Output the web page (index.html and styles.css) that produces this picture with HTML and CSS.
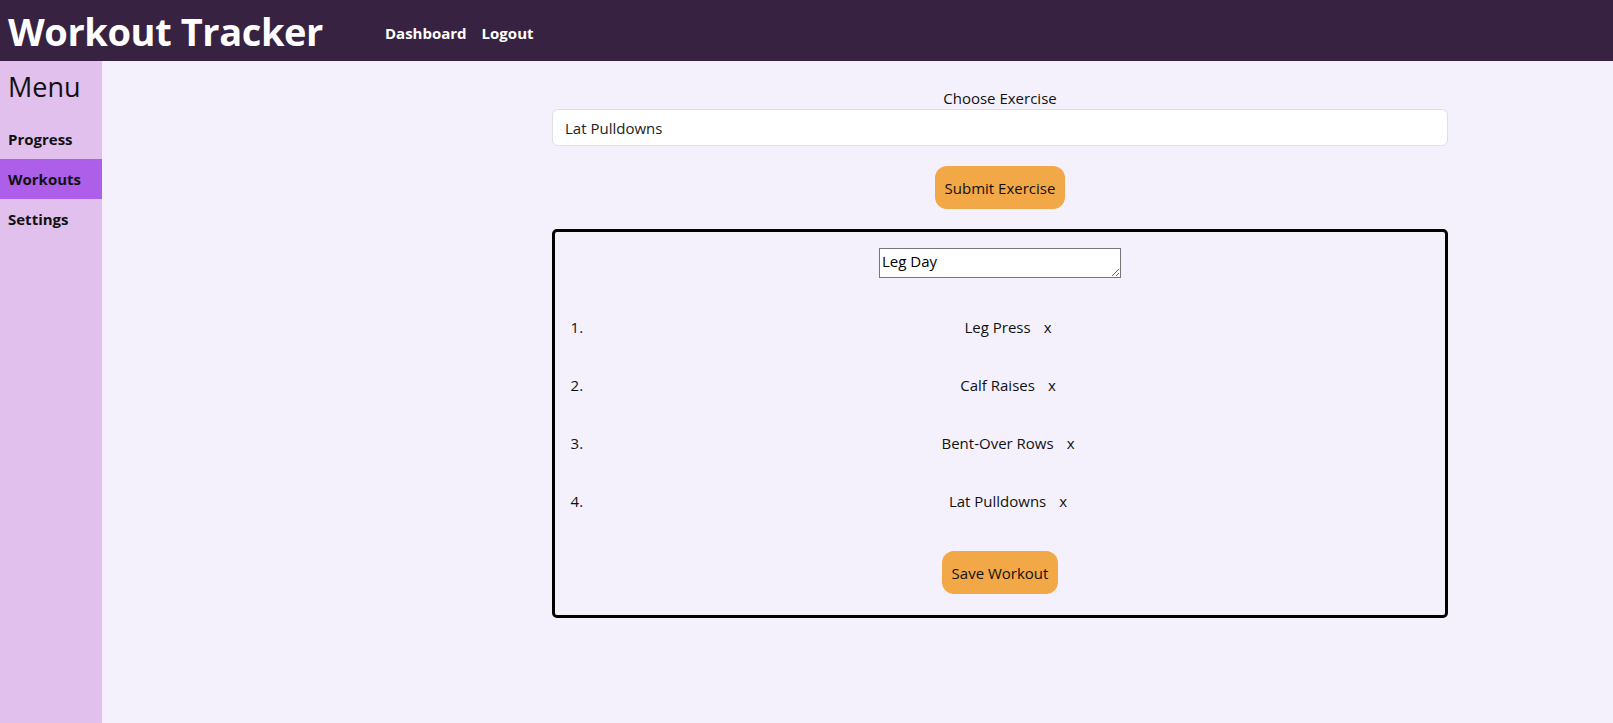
FILE: index.html
```html
<!DOCTYPE html>
<html>
<head>
<meta charset="utf-8">
<link rel="stylesheet" href="styles.css">
</head>
<body>
<header class="topbar">
  <h1 class="brand">Workout Tracker</h1>
  <nav class="topnav">
    <a href="#">Dashboard</a>
    <a href="#">Logout</a>
  </nav>
</header>
<div class="layout">
  <aside class="sidebar">
    <h2 class="menu-title">Menu</h2>
    <a class="side-link" href="#">Progress</a>
    <a class="side-link active" href="#">Workouts</a>
    <a class="side-link" href="#">Settings</a>
  </aside>
  <main class="main">
    <div class="column">
      <label class="field-label">Choose Exercise</label>
      <input class="field" type="text" value="Lat Pulldowns">
      <button class="btn">Submit Exercise</button>
      <section class="workout">
        <textarea class="name">Leg Day</textarea>
        <ol class="list">
          <li><span>Leg Press</span><span class="del">x</span></li>
          <li><span>Calf Raises</span><span class="del">x</span></li>
          <li><span>Bent-Over Rows</span><span class="del">x</span></li>
          <li><span>Lat Pulldowns</span><span class="del">x</span></li>
        </ol>
        <button class="btn">Save Workout</button>
      </section>
    </div>
  </main>
</div>
</body>
</html>
```
FILE: styles.css
```css
* { box-sizing: border-box; }
html, body { height: 100%; }
body {
  margin: 0;
  font-family: "Open Sans", "Noto Sans", sans-serif;
  font-size: 15px;
  color: #111;
  background: #f4f1fd;
  display: flex;
  flex-direction: column;
}
.topbar {
  height: 61px;
  background: #382241;
  display: flex;
  align-items: center;
  padding-left: 8px;
  flex-shrink: 0;
}
.brand {
  margin: 0;
  color: #fff;
  font-size: 38px;
  font-weight: 700;
  line-height: 1;
  letter-spacing: -0.4px;
}
.topnav {
  display: flex;
  gap: 15px;
  margin-left: 62px;
  padding-top: 5px;
}
.topnav a {
  color: #fff;
  text-decoration: none;
  font-weight: 700;
  font-size: 15px;
}
.layout {
  flex: 1;
  display: flex;
}
.sidebar {
  width: 102px;
  background: #e2c0ee;
  display: flex;
  flex-direction: column;
  flex-shrink: 0;
}
.menu-title {
  margin: 0;
  font-weight: 400;
  font-size: 27px;
  line-height: 36px;
  padding: 8px 8px 14px;
  color: #111;
}
.side-link {
  display: block;
  height: 40px;
  line-height: 40px;
  padding-left: 8px;
  font-weight: 700;
  font-size: 15px;
  color: #111;
  text-decoration: none;
}
.side-link.active { background: #ad5fea; }
.main {
  flex: 1;
  padding-left: 450px;
  padding-top: 26px;
}
.column {
  width: 896px;
  display: flex;
  flex-direction: column;
  align-items: center;
}
.field-label {
  font-size: 15px;
  line-height: 22px;
}
.field {
  width: 100%;
  height: 37px;
  margin-top: 0;
  border: 1px solid #dedfe6;
  border-radius: 6px;
  background: #fff;
  padding: 0 12px;
  font-family: inherit;
  font-size: 15px;
  color: #222;
}
.btn {
  background: #f2a847;
  border: none;
  border-radius: 12px;
  height: 43px;
  padding: 0 10px;
  font-family: inherit;
  font-size: 15px;
  color: #111;
}
.column > .btn { margin-top: 20px; }
.workout {
  margin-top: 20px;
  width: 100%;
  border: 3px solid #000;
  border-radius: 5px;
  padding: 16px 16px 21px;
  display: flex;
  flex-direction: column;
  align-items: center;
}
.name {
  width: 242px;
  height: 30px;
  border: 1px solid #767676;
  border-radius: 0;
  background: #fff;
  font-family: inherit;
  font-size: 15px;
  line-height: 20px;
  padding: 2px 2px;
  color: #000;
  resize: vertical;
}
.list {
  width: 100%;
  margin: 20px 0 21px;
  padding-left: 16px;
}
.list li {
  height: 58px;
  line-height: 58px;
  text-align: center;
}
.del { margin-left: 13px; }
```
